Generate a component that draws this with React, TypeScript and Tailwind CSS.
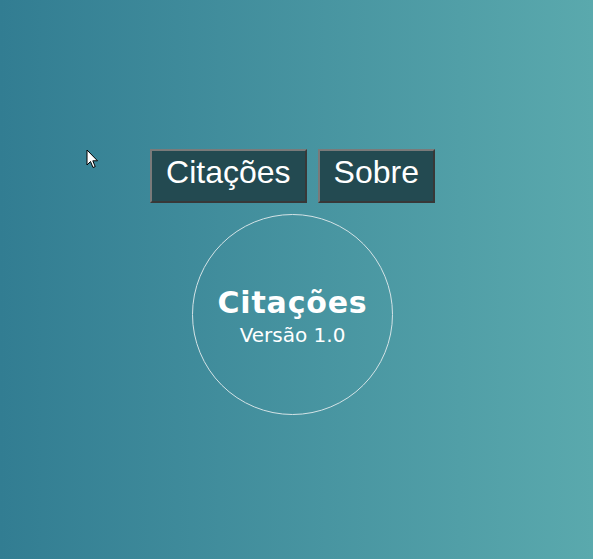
import React from "react";

export default function App() {
  return (
    <div className="relative h-[559px] w-full overflow-hidden bg-linear-to-r from-[#327d92] to-[#5aa9ad]">
      <div className="flex flex-col items-center pt-[149px] pr-[8px]">
        <div className="flex gap-[11px]">
          <button className="border-2 border-t-[#7a7a7a] border-l-[#7a7a7a] border-b-[#383838] border-r-[#383838] bg-[#234a51] px-[14px] pt-[3px] pb-[11px] text-[32px] leading-[36px] text-white font-['Liberation_Sans',Arial,sans-serif]">
            Citações
          </button>
          <button className="border-2 border-t-[#7a7a7a] border-l-[#7a7a7a] border-b-[#383838] border-r-[#383838] bg-[#234a51] px-[14px] pt-[3px] pb-[11px] text-[32px] leading-[36px] text-white font-['Liberation_Sans',Arial,sans-serif]">
            Sobre
          </button>
        </div>
        <div className="mt-[11px] flex h-[201px] w-[201px] flex-col items-center rounded-full border border-[#d4e3e6] pt-[71px] text-white font-['DejaVu_Sans',sans-serif]">
          <div className="text-[30px] font-bold leading-[34px] tracking-[0.8px]">Citações</div>
          <div className="mt-[3px] text-[20px] leading-[24px]">Versão 1.0</div>
        </div>
      </div>
      <svg
        className="absolute left-[86px] top-[149px]"
        width="14"
        height="21"
        viewBox="0 0 14 21"
      >
        <path
          d="M1 1 L1 16 L4.5 12.5 L7 18.5 L9.2 17.6 L6.8 11.8 L11.5 11.8 Z"
          fill="#fff"
          stroke="#000"
          strokeWidth="1"
          strokeLinejoin="miter"
        />
      </svg>
    </div>
  );
}
